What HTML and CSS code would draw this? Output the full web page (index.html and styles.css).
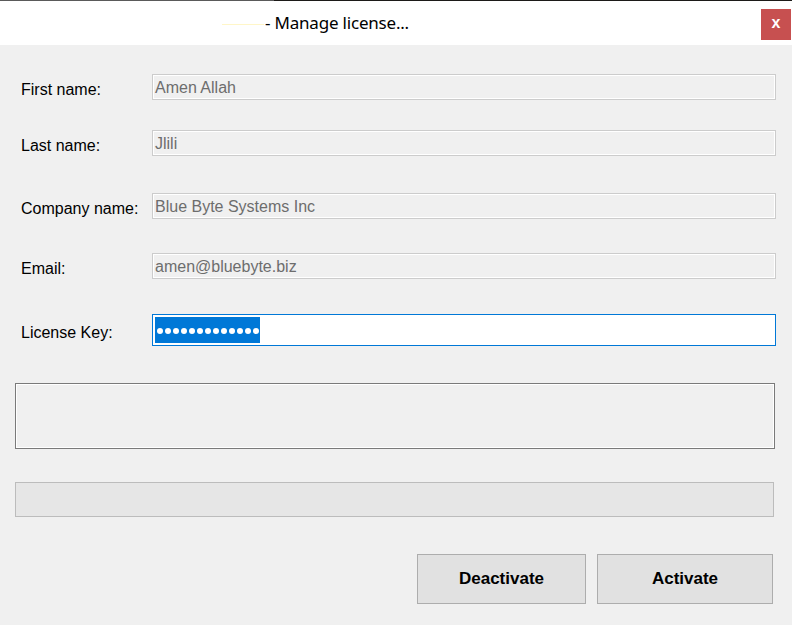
FILE: index.html
```html
<!DOCTYPE html>
<html>
<head>
<meta charset="utf-8">
<link rel="stylesheet" href="styles.css">
</head>
<body>
<div class="window">
  <div class="topline"><span class="topline-left"></span><span class="topline-right"></span></div>
  <div class="titlebar">
    <span class="title-mark"></span>
    <span class="title-text">- Manage license...</span>
    <button class="close">x</button>
  </div>
  <div class="content">
    <div class="row row-first">
      <span class="label">First name:</span>
      <div class="field disabled">Amen Allah</div>
    </div>
    <div class="row row-last">
      <span class="label">Last name:</span>
      <div class="field disabled">Jlili</div>
    </div>
    <div class="row row-company">
      <span class="label">Company name:</span>
      <div class="field disabled">Blue Byte Systems Inc</div>
    </div>
    <div class="row row-email">
      <span class="label">Email:</span>
      <div class="field disabled">amen@bluebyte.biz</div>
    </div>
    <div class="row row-key">
      <span class="label">License Key:</span>
      <div class="field key">
        <span class="selection">
          <span class="dot"></span><span class="dot"></span><span class="dot"></span><span class="dot"></span><span class="dot"></span><span class="dot"></span><span class="dot"></span><span class="dot"></span><span class="dot"></span><span class="dot"></span><span class="dot"></span><span class="dot"></span><span class="dot"></span>
        </span>
      </div>
    </div>
    <div class="message-box"></div>
    <div class="progress"></div>
    <div class="buttons">
      <button class="btn btn-deactivate">Deactivate</button>
      <button class="btn btn-activate">Activate</button>
    </div>
  </div>
</div>
</body>
</html>
```

FILE: styles.css
```css
* { box-sizing: border-box; }
html, body { margin: 0; padding: 0; }
body {
  width: 792px;
  height: 625px;
  background: #f0f0f0;
  font-family: "Liberation Sans", Arial, sans-serif;
  overflow: hidden;
}
.window { display: flex; flex-direction: column; }
.topline { display: flex; height: 1px; }
.topline-left { width: 274px; background: #5a5a5a; }
.topline-right { flex: 1; background: #1c1a18; }
.titlebar {
  height: 44px;
  background: #ffffff;
  display: flex;
  align-items: center;
  padding-left: 222px;
  padding-right: 1px;
}
.title-mark {
  width: 42px;
  height: 1px;
  background: #fff6c8;
  margin-top: 2px;
}
.title-text {
  font-family: "Noto Sans", "Open Sans", sans-serif;
  font-size: 17px;
  color: #000;
  margin-left: 1px;
  margin-bottom: 1px;
  letter-spacing: -0.2px;
}
.close {
  margin-left: auto;
  margin-top: 2px;
  width: 30px;
  height: 31px;
  border: none;
  background: #c75050;
  color: #fff;
  font-family: "Liberation Sans", Arial, sans-serif;
  font-weight: bold;
  font-size: 16px;
  padding: 0 0 3px 0;
}
.content { display: flex; flex-direction: column; }
.row { display: flex; align-items: center; padding-left: 21px; }
.label {
  width: 131px;
  font-size: 16px;
  color: #000;
  padding-top: 6px;
}
.field {
  width: 624px;
  font-size: 16px;
  display: flex;
  align-items: center;
}
.field.disabled {
  height: 26px;
  border: 1px solid #cccccc;
  box-shadow: inset 0 0 0 1px #ffffff;
  background: #f0f0f0;
  color: #6d6d6d;
  padding-left: 2px;
  padding-top: 1px;
}
.row-first { margin-top: 29px; }
.row-last { margin-top: 30px; }
.row-company { margin-top: 37px; }
.row-email { margin-top: 34px; }
.row-key { margin-top: 35px; }
.field.key {
  height: 32px;
  border: 1px solid #0078d7;
  background: #ffffff;
  padding: 2px;
}
.selection {
  height: 26px;
  width: 105px;
  background: #0078d7;
  display: flex;
  align-items: center;
  gap: 2px;
  padding-left: 2px;
  padding-top: 1px;
}
.dot {
  width: 6px;
  height: 6px;
  border-radius: 50%;
  background: #ffffff;
}
.message-box {
  margin: 37px 0 0 15px;
  width: 760px;
  height: 66px;
  border: 1px solid #7a7a7a;
  box-shadow: inset 0 0 0 1px #ffffff;
  background: #f0f0f0;
}
.progress {
  margin: 33px 0 0 15px;
  width: 759px;
  height: 35px;
  border: 1px solid #bcbcbc;
  background: #e6e6e6;
}
.buttons {
  display: flex;
  gap: 11px;
  margin: 37px 0 0 417px;
}
.btn {
  height: 50px;
  border: 1px solid #adadad;
  background: #e1e1e1;
  font-family: "Liberation Sans", Arial, sans-serif;
  font-weight: bold;
  font-size: 17px;
  color: #000;
  padding: 0;
}
.btn-deactivate { width: 169px; }
.btn-activate { width: 176px; }
```
